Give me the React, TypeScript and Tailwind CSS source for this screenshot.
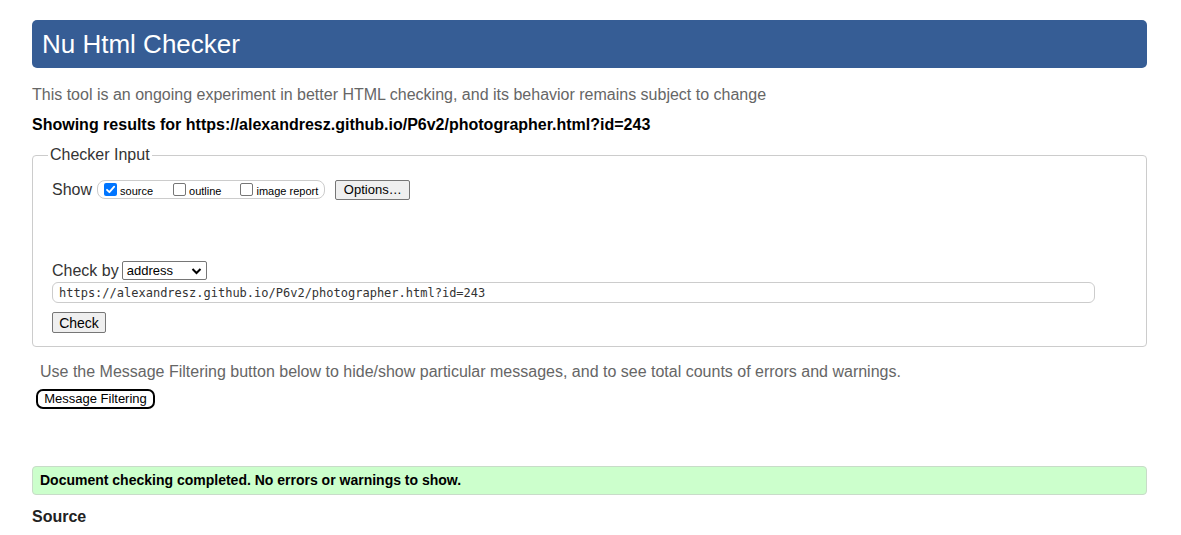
import React from "react";

function Check({ checked }: { checked?: boolean }) {
  return checked ? (
    <span className="inline-block w-[13px] h-[13px] rounded-[2px] bg-[#0075ff] relative shrink-0">
      <svg viewBox="0 0 13 13" className="absolute inset-0 w-[13px] h-[13px]">
        <path d="M3 6.8 L5.4 9.2 L10.2 3.6" fill="none" stroke="#fff" strokeWidth="1.8" strokeLinecap="round" strokeLinejoin="round" />
      </svg>
    </span>
  ) : (
    <span className="inline-block w-[13px] h-[13px] rounded-[2px] border border-[#767676] bg-white shrink-0" />
  );
}

export default function App() {
  return (
    <div className="min-h-[535px] bg-white pl-8 pr-[34px] pt-5 text-[16px] text-[#000]" style={{ fontFamily: '"Liberation Sans", Arial, sans-serif' }}>
      <div className="h-12 rounded-[5px] bg-[#365d95] pl-[10px] flex items-center">
        <h1 className="text-[26px] leading-none text-white">Nu Html Checker</h1>
      </div>
      <p className="mt-[17px] text-[16px] leading-[19px] text-[#666]">
        This tool is an ongoing experiment in better HTML checking, and its behavior remains subject to change
      </p>
      <p className="mt-[11px] text-[16px] leading-[19px] font-bold text-[#000]">
        Showing results for https://alexandresz.github.io/P6v2/photographer.html?id=243
      </p>
      <fieldset className="mt-[12px] border border-[#ccc] rounded-[4px] pl-[19px] pr-[51px] pb-[11px] pt-[15px]">
        <legend className="-ml-[4px] px-[2px] text-[16px] leading-[18px] text-[#333]">Checker Input</legend>
        <div className="flex items-center h-[21px]">
          <span className="text-[16px] text-[#333] mr-[5px]">Show</span>
          <div className="flex items-center h-[19px] border border-[#ccc] rounded-[8px] pl-[6px] pr-[6px] text-[11px] text-[#000]">
            <Check checked />
            <span className="ml-[3px] mr-[20px] mt-[3px]">source</span>
            <Check />
            <span className="ml-[3px] mr-[19px] mt-[3px]">outline</span>
            <Check />
            <span className="ml-[3px] mt-[3px]">image report</span>
          </div>
          <button className="ml-[10px] h-[20px] w-[75px] border border-[#767676] rounded-[2px] bg-[#efefef] text-[13px] text-black leading-none">
            Options…
          </button>
        </div>
        <div className="h-[61px]" />
        <div className="flex items-center h-[19px]">
          <span className="text-[16px] text-[#333]">Check by</span>
          <div className="ml-[3px] w-[85px] h-[19px] border border-[#767676] rounded-[2px] bg-white flex items-center justify-between pl-[4px] pr-[4px] text-[13px] text-black">
            <span>address</span>
            <svg width="11" height="8" viewBox="0 0 11 8">
              <path d="M1.5 2 L5.5 6 L9.5 2" fill="none" stroke="#000" strokeWidth="2" />
            </svg>
          </div>
        </div>
        <div className="mt-[2px] h-[21px] border border-[#ccc] rounded-[6px] flex items-center pl-[6px] text-[12px] text-[#333]" style={{ fontFamily: '"DejaVu Sans Mono", "Liberation Mono", monospace' }}>
          https://alexandresz.github.io/P6v2/photographer.html?id=243
        </div>
        <button className="mt-[9px] h-[21px] w-[54px] border border-[#767676] rounded-[2px] bg-[#efefef] text-[14px] text-black leading-none">
          Check
        </button>
      </fieldset>
      <p className="mt-[15px] ml-[8px] text-[16px] leading-[19px] text-[#666]">
        Use the Message Filtering button below to hide/show particular messages, and to see total counts of errors and warnings.
      </p>
      <button className="mt-[8px] ml-[4px] h-[20px] w-[119px] border-2 border-black rounded-[7px] bg-white text-[13px] text-black leading-none">
        Message Filtering
      </button>
      <div className="mt-[56px] h-[29px] border border-[#c8dcc8] rounded-[4px] bg-[#ccffcc] flex items-center pl-[7px]">
        <span className="text-[14px] font-bold text-black">Document checking completed. No errors or warnings to show.</span>
      </div>
      <h2 className="mt-[12px] text-[16px] font-bold text-[#222] leading-[19px]">Source</h2>
    </div>
  );
}
